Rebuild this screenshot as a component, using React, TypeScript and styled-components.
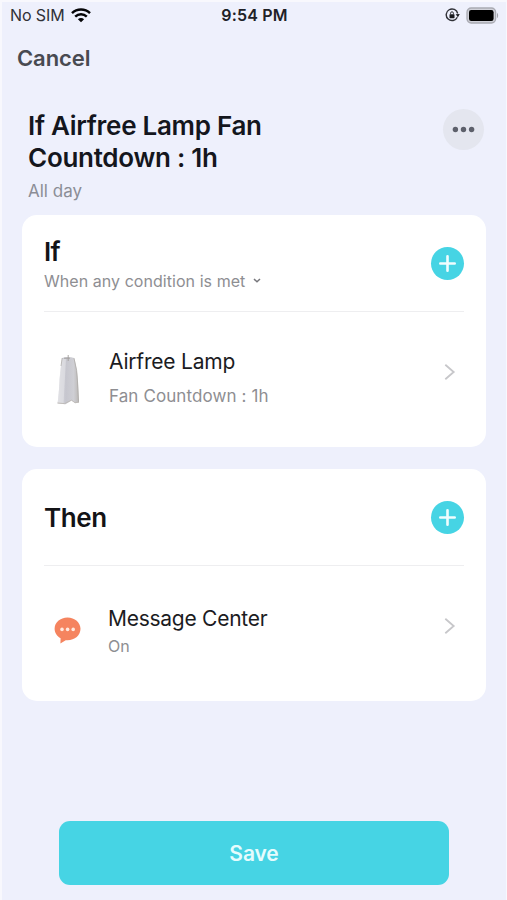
import React from 'react';
import styled, { createGlobalStyle } from 'styled-components';

const GlobalStyle = createGlobalStyle`
  * { box-sizing: border-box; }
  body { margin: 0; background: #f8f8fd; font-family: Inter, "Liberation Sans", sans-serif; }
  h1, h2, p { margin: 0; }
  button { border: 0; padding: 0; font-family: inherit; }
`;

const Screen = styled.main`
  width: 507px;
  height: 900px;
  overflow: hidden;
  display: flex;
  flex-direction: column;
  background: #eef0fc;
  border: solid #f8f8fd;
  border-width: 2px 1px 0 2px;
`;

const StatusBar = styled.header`
  height: 26px;
  flex: none;
  display: grid;
  grid-template-columns: 1fr auto 1fr;
  align-items: center;
  padding: 0 7px 0 8px;
  color: #17181d;
`;

const StatusGroup = styled.div<{ $end?: boolean }>`
  display: flex;
  align-items: center;
  justify-content: ${({ $end }) => ($end ? 'flex-end' : 'flex-start')};
  gap: 6px;
  svg { display: block; }
`;

const Label = styled.span<{ $size: number; $weight?: number; $color?: string; $track?: number; $line?: number }>`
  font-size: ${({ $size }) => $size}px;
  font-weight: ${({ $weight = 400 }) => $weight};
  color: ${({ $color = '#1c1c1f' }) => $color};
  letter-spacing: ${({ $track = 0 }) => $track}px;
  line-height: ${({ $line = 24 }) => $line}px;
  white-space: nowrap;
`;

const NavBar = styled.nav`
  height: 60px;
  flex: none;
  display: flex;
  align-items: center;
  padding: 0 15px;
`;

const CancelButton = styled.button`
  background: none;
  color: #484a51;
  font-size: 22px;
  font-weight: 600;
  letter-spacing: -0.1px;
  line-height: 28px;
`;

const Heading = styled.section`
  height: 127px;
  flex: none;
  display: flex;
  justify-content: space-between;
  padding: 21px 22px 0 26px;
`;

const Title = styled.h1`
  font-size: 26px;
  font-weight: 600;
  line-height: 32px;
  letter-spacing: -0.28px;
  color: #14161d;
  margin: 1px 0 5px;
`;

const MoreButton = styled.button`
  width: 41px;
  height: 41px;
  border-radius: 50%;
  background: #e4e6ef;
  display: grid;
  place-items: center;
`;

const CardList = styled.div`
  display: flex;
  flex-direction: column;
  gap: 22px;
  padding: 0 20px;
`;

const Card = styled.section`
  height: 232px;
  border-radius: 15px;
  background: #fff;
  padding: 0 22px;
`;

const CardHeader = styled.div`
  height: 97px;
  display: flex;
  align-items: center;
  justify-content: space-between;
  border-bottom: 1px solid #eeeef0;
`;

const CardHeading = styled.div`
  display: flex;
  flex-direction: column;
  padding-top: 2px;
`;

const CardTitle = styled.h2<{ $track: number }>`
  font-size: 26px;
  font-weight: 600;
  line-height: 32px;
  letter-spacing: ${({ $track }) => $track}px;
  color: #131316;
`;

const MatchRule = styled.div`
  display: flex;
  align-items: center;
  gap: 8px;
  margin-top: 1px;
`;

const AddButton = styled.button`
  width: 33px;
  height: 33px;
  border-radius: 50%;
  background: #46d4e4;
  display: grid;
  place-items: center;
`;

const Row = styled.div`
  height: 120px;
  display: grid;
  grid-template-columns: 47px 1fr 20px;
  align-items: center;
`;

const RowIcon = styled.div<{ $top: number }>`
  display: grid;
  justify-items: center;
  padding-top: ${({ $top }) => $top}px;
`;

const RowText = styled.div<{ $gap: number; $left: number; $top: number }>`
  display: flex;
  flex-direction: column;
  gap: ${({ $gap }) => $gap}px;
  padding: ${({ $top }) => $top}px 0 0 ${({ $left }) => $left}px;
`;

const Footer = styled.footer`
  margin: auto 57px 15px;
`;

const SaveButton = styled.button`
  width: 390px;
  height: 64px;
  display: block;
  border-radius: 11px;
  background: #46d4e4;
  color: #e6fcfd;
  font-size: 21px;
  font-weight: 600;
  letter-spacing: -0.1px;
`;

const WifiIcon = () => (
  <svg width="20" height="15" viewBox="0 0 20 15" fill="none" stroke="#050507" strokeWidth="2.5">
    <path d="M1 5.2C6 .4 14 .4 19 5.2" />
    <path d="M4.2 8.6c3.3-3.1 8.3-3.1 11.6 0" />
    <path d="M10 14.3 6.9 11.2c1.8-1.6 4.4-1.6 6.2 0Z" fill="#050507" stroke="none" />
  </svg>
);

const RotationLockIcon = () => (
  <svg width="15" height="14" viewBox="0 0 15 14" fill="none" stroke="#303137">
    <path d="M12.3 9.2A5.8 5.8 0 1 1 12.7 5.5" strokeWidth="1.4" />
    <path d="m10.7 6.2 4.1-.2-1.9 3.3Z" fill="#17181d" stroke="none" />
    <rect x="4.5" y="6.2" width="5" height="4" rx=".6" fill="#17181d" stroke="none" />
    <path d="M5.6 6.5V5.2a1.4 1.4 0 0 1 2.8 0v1.3" strokeWidth="1" />
  </svg>
);

const BatteryIcon = () => (
  <svg width="33" height="17" viewBox="0 0 33 17">
    <rect x="1" y="1" width="28.6" height="15" rx="4.2" fill="#d0d1d9" stroke="#a9aab2" strokeWidth="1.3" />
    <rect x="3" y="3" width="24.6" height="11" rx="2.2" fill="#000" />
    <path d="M31 6c1.5.6 1.5 4.4 0 5Z" fill="#a3a4ab" />
  </svg>
);

const DotsIcon = () => (
  <svg width="23" height="7" viewBox="0 0 23 7" fill="#5d606b">
    <circle cx="3.4" cy="3.5" r="2.7" />
    <circle cx="11.5" cy="3.5" r="2.7" />
    <circle cx="19.6" cy="3.5" r="2.7" />
  </svg>
);

const PlusIcon = () => (
  <svg width="17" height="17" viewBox="0 0 17 17" stroke="#f0fdfe" strokeWidth="2.6" strokeLinecap="round">
    <path d="M8.5 1.3v14.4M1.3 8.5h14.4" />
  </svg>
);

const ChevronDown = () => (
  <svg width="8" height="6" viewBox="0 0 8 6" fill="none" stroke="#77777c" strokeWidth="1.5">
    <path d="m1 1 3 2.8L7 1" />
  </svg>
);

const ChevronRight = () => (
  <svg width="12" height="18" viewBox="0 0 12 18" fill="none" stroke="#c7c7ca" strokeWidth="1.8">
    <path d="m1.3 1.8 8.4 7.2-8.4 7.2" />
  </svg>
);

const LampIcon = () => (
  <svg width="24" height="52" viewBox="0 0 24 52">
    <defs>
      <linearGradient id="lampBody" x1="0" x2="1">
        <stop offset="0" stopColor="#dcdce1" />
        <stop offset=".4" stopColor="#c6c6ce" />
        <stop offset=".75" stopColor="#cfcfd4" />
        <stop offset="1" stopColor="#bbb8b5" />
      </linearGradient>
    </defs>
    <path d="M6 4Q12 2 18.2 4Q21.5 16 22 30L23 48.5l-3.5.8-4-2.8-6 3.7-8-.7Q3 40 3.6 25Z" fill="url(#lampBody)" />
    <path d="M6 5Q3.8 15 3.6 28L1.8 49l5.7.8L10 5Z" fill="#e4e4e8" opacity=".6" />
    <path d="M12.2 1v6M8 4.2h6" fill="none" stroke="#a19e9b" strokeWidth=".9" />
    <path d="M6.2 4 5 12M18 4.2Q21.5 16 21.7 30l.8 18" fill="none" stroke="#a9a6a3" strokeWidth=".7" />
    <path d="m1.5 49 7 .6 7-3.4 3.5 2.5 4-.7" fill="none" stroke="#bdbab6" strokeWidth=".9" />
  </svg>
);

const MessageIcon = () => (
  <svg width="27" height="27" viewBox="0 0 27 27">
    <path d="M13.5.5C6.2.5.6 5.5.6 11.7c0 4.2 2.5 7.6 6 9.5L6.4 26.5l5.3-3.3c8.4.8 14.8-4.4 14.8-11.4C26.5 5.5 20.8.5 13.5.5Z" fill="#f5845f" />
    <g fill="#ffe9de">
      <circle cx="8" cy="12.4" r="1.8" />
      <circle cx="13.6" cy="12.4" r="1.8" />
      <circle cx="19.2" cy="12.4" r="1.8" />
    </g>
  </svg>
);

export default function App() {
  return (
    <>
      <GlobalStyle />
      <Screen>
        <StatusBar>
          <StatusGroup>
            <Label $size={16} $color="#303137" $track={-0.1}>No SIM</Label>
            <WifiIcon />
          </StatusGroup>
          <Label $size={16} $weight={600} $color="#202127" $track={0.2}>9:54 PM</Label>
          <StatusGroup $end>
            <RotationLockIcon />
            <BatteryIcon />
          </StatusGroup>
        </StatusBar>
        <NavBar>
          <CancelButton>Cancel</CancelButton>
        </NavBar>
        <Heading>
          <div>
            <Title>If Airfree Lamp Fan<br />Countdown : 1h</Title>
            <Label $size={17} $color="#8b8d96" $track={0}>All day</Label>
          </div>
          <MoreButton aria-label="More"><DotsIcon /></MoreButton>
        </Heading>
        <CardList>
          <Card>
            <CardHeader>
              <CardHeading>
                <CardTitle $track={-0.8}>If</CardTitle>
                <MatchRule>
                  <Label $size={16} $color="#8e8e92" $track={0.05}>When any condition is met</Label>
                  <ChevronDown />
                </MatchRule>
              </CardHeading>
              <AddButton aria-label="Add condition"><PlusIcon /></AddButton>
            </CardHeader>
            <Row>
              <RowIcon $top={16}><LampIcon /></RowIcon>
              <RowText $left={18} $gap={9} $top={12}>
                <Label $size={21} $line={26} $track={-0.2}>Airfree Lamp</Label>
                <Label $size={17} $color="#8e8e92" $track={0.1}>Fan Countdown : 1h</Label>
              </RowText>
              <ChevronRight />
            </Row>
          </Card>
          <Card>
            <CardHeader>
              <CardHeading>
                <CardTitle $track={-0.4}>Then</CardTitle>
              </CardHeading>
              <AddButton aria-label="Add action"><PlusIcon /></AddButton>
            </CardHeader>
            <Row>
              <RowIcon $top={8}><MessageIcon /></RowIcon>
              <RowText $left={17} $gap={2} $top={11}>
                <Label $size={21} $line={26} $track={-0.26}>Message Center</Label>
                <Label $size={16} $color="#8e8e92">On</Label>
              </RowText>
              <ChevronRight />
            </Row>
          </Card>
        </CardList>
        <Footer>
          <SaveButton>Save</SaveButton>
        </Footer>
      </Screen>
    </>
  );
}
